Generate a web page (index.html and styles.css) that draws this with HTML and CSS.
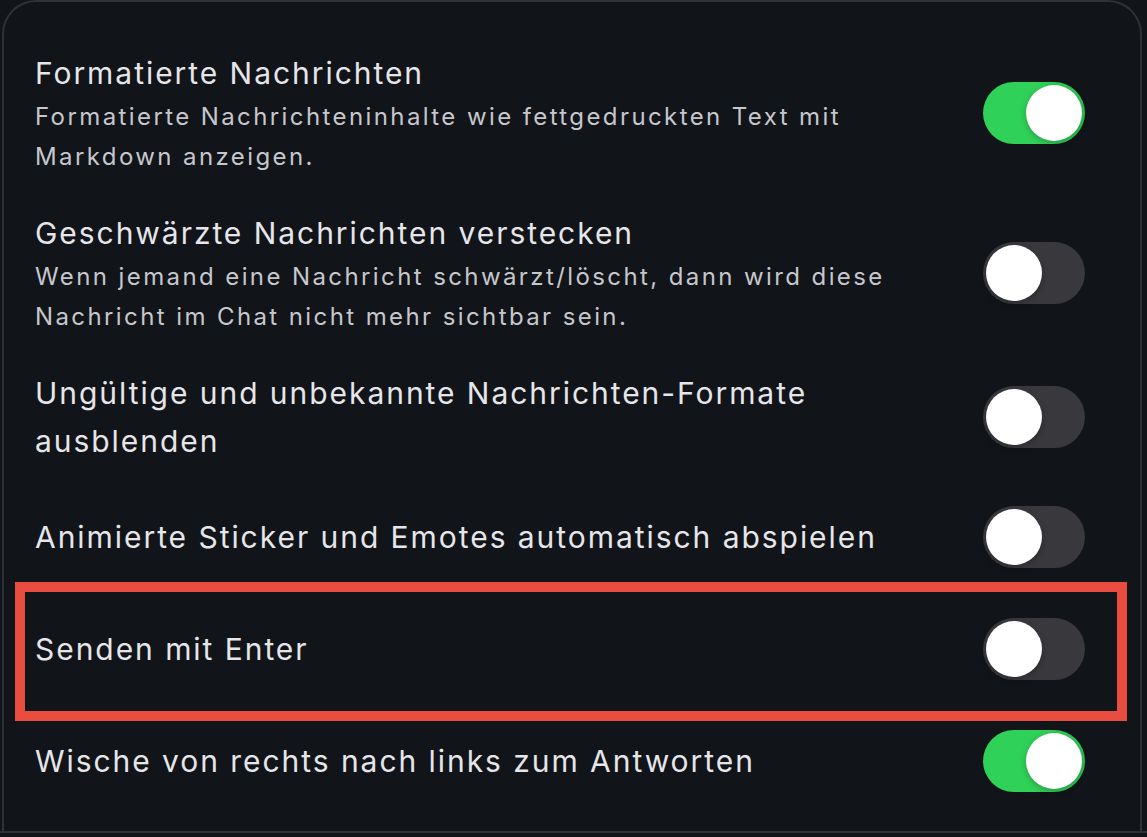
FILE: index.html
```html
<!DOCTYPE html>
<html lang="de">
<head>
    <meta charset="UTF-8">
    <meta name="viewport" content="width=device-width, initial-scale=1.0">
    <title>Chat-Einstellungen</title>
    <link rel="stylesheet" href="styles.css">
</head>
<body>
    <div class="card">
        <div class="row">
            <div class="text">
                <div class="title">Formatierte Nachrichten</div>
                <div class="desc">Formatierte Nachrichteninhalte wie fettgedruckten Text mit Markdown anzeigen.</div>
            </div>
            <span class="toggle on"><span class="knob"></span></span>
        </div>

        <div class="row">
            <div class="text">
                <div class="title">Geschwärzte Nachrichten verstecken</div>
                <div class="desc">Wenn jemand eine Nachricht schwärzt/löscht, dann wird diese Nachricht im Chat nicht mehr sichtbar sein.</div>
            </div>
            <span class="toggle"><span class="knob"></span></span>
        </div>

        <div class="row">
            <div class="text">
                <div class="title">Ungültige und unbekannte Nachrichten-Formate ausblenden</div>
            </div>
            <span class="toggle"><span class="knob"></span></span>
        </div>

        <div class="row">
            <div class="text">
                <div class="title">Animierte Sticker und Emotes automatisch abspielen</div>
            </div>
            <span class="toggle"><span class="knob"></span></span>
        </div>

        <div class="row highlighted">
            <div class="text">
                <div class="title">Senden mit Enter</div>
            </div>
            <span class="toggle"><span class="knob"></span></span>
            <div class="marker"></div>
        </div>

        <div class="row">
            <div class="text">
                <div class="title">Wische von rechts nach links zum Antworten</div>
            </div>
            <span class="toggle on"><span class="knob"></span></span>
        </div>
    </div>
    <div class="divider"></div>
</body>
</html>
```

FILE: styles.css
```css
body { margin: 0; background: #111418; font-family: Inter, "Noto Sans", sans-serif; overflow: hidden; }

.card { margin: 0 5px 0 2px; height: 831px; box-sizing: border-box; padding: 31px 0 14px; border: 2px solid #2e3136; border-bottom: none; border-radius: 34px 34px 0 0; }
.divider { height: 2px; background: #2e3136; }

.row { position: relative; display: flex; align-items: center; gap: 40px; min-height: 112px; box-sizing: border-box; padding: 16px 55px 16px 31px; }
.text { flex: 1; }
.title { font-size: 30px; line-height: 48px; color: #e6e6ea; letter-spacing: 1.95px; }
.desc { font-size: 24px; line-height: 40px; color: #c6c7cc; letter-spacing: 2.4px; }

.toggle { position: relative; flex: none; width: 102px; height: 62px; border-radius: 31px; background: #39393d; }
.toggle.on { background: linear-gradient(90deg, #30d158 60%, #2cc552); }
.knob { position: absolute; top: 3px; left: 3px; width: 56px; height: 56px; border-radius: 50%; background: #fff; box-shadow: 0 2px 6px rgba(0, 0, 0, 0.25); }
.toggle.on .knob { left: 43px; }

.marker { position: absolute; top: -11px; bottom: -16px; left: 11px; right: 13px; border: 10px solid #e84d3f; }
```
